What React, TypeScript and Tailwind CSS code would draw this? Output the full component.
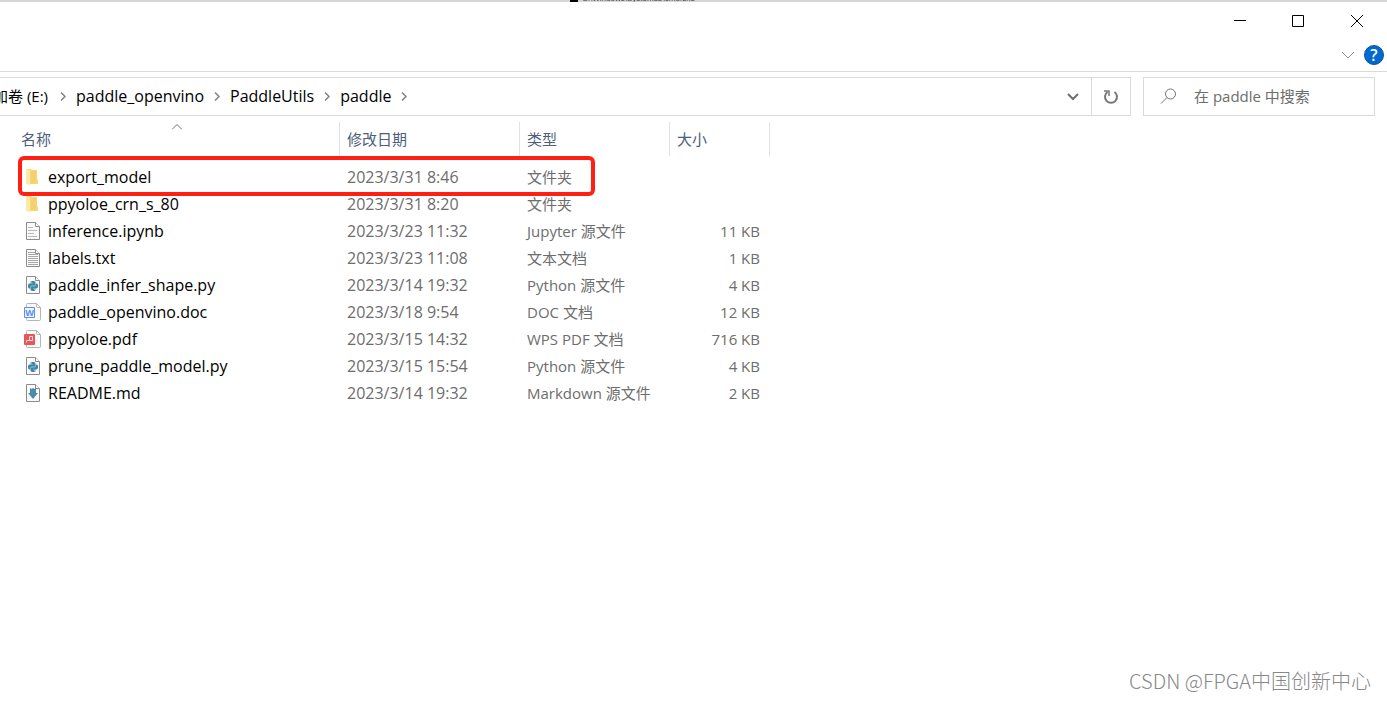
import { useState } from "react";
import { SiPython } from "react-icons/si";

type FileKind = "folder" | "notebook" | "text" | "python" | "doc" | "pdf" | "markdown";

type FileRow = {
    name: string;
    date: string;
    type: string;
    size?: string;
    kind: FileKind;
};

const files: FileRow[] = [
    { name: "export_model", date: "2023/3/31 8:46", type: "文件夹", kind: "folder" },
    { name: "ppyoloe_crn_s_80", date: "2023/3/31 8:20", type: "文件夹", kind: "folder" },
    { name: "inference.ipynb", date: "2023/3/23 11:32", type: "Jupyter 源文件", size: "11 KB", kind: "notebook" },
    { name: "labels.txt", date: "2023/3/23 11:08", type: "文本文档", size: "1 KB", kind: "text" },
    { name: "paddle_infer_shape.py", date: "2023/3/14 19:32", type: "Python 源文件", size: "4 KB", kind: "python" },
    { name: "paddle_openvino.doc", date: "2023/3/18 9:54", type: "DOC 文档", size: "12 KB", kind: "doc" },
    { name: "ppyoloe.pdf", date: "2023/3/15 14:32", type: "WPS PDF 文档", size: "716 KB", kind: "pdf" },
    { name: "prune_paddle_model.py", date: "2023/3/15 15:54", type: "Python 源文件", size: "4 KB", kind: "python" },
    { name: "README.md", date: "2023/3/14 19:32", type: "Markdown 源文件", size: "2 KB", kind: "markdown" },
];

const crumbs = ["paddle_openvino", "PaddleUtils", "paddle"];

function Page() {
    return (
        <>
            <path d="M2.5 .5h9l4 4v13h-13z" fill="#fafafa" stroke="#8c8c8c" />
            <path d="M11.5 .5v4h4" fill="#fff" stroke="#8c8c8c" />
        </>
    );
}

function RoundedPage() {
    return (
        <>
            <path d="M3.5 .5h9l4 4v12q0 1-1 1h-12q-1 0-1-1v-15q0-1 1-1z" fill="#fafafa" stroke="#b5b5b5" />
            <path d="M12.5 .5v3q0 1 1 1h3" stroke="#b5b5b5" />
        </>
    );
}

function FileIcon({ kind }: { kind: FileKind }) {
    return (
        <svg width="18" height="18" viewBox="0 0 18 18" fill="none" className="shrink-0" aria-hidden="true">
            {kind === "folder" && (
                <>
                    <path d="M2 1h5l1 1h5v9l1 1v4H2z" fill="#f8d775" />
                    <path d="M7 3h5v12H7z" fill="#f6d06c" />
                    <path d="M2 1l4 1v15l-4-1z" fill="#ffe9a6" />
                </>
            )}
            {kind === "notebook" && (
                <>
                    <Page />
                    <path d="M4 5.5h5M4 8.5h9M4 11.5h6M4 14.5h9" stroke="#b8b8b8" />
                </>
            )}
            {kind === "text" && (
                <>
                    <Page />
                    <path d="M4 3.5h7M4 5.5h10M4 7.5h10M4 9.5h10M4 11.5h10M4 13.5h10M4 15.5h10" stroke="#a8a8a8" />
                </>
            )}
            {kind === "python" && (
                <>
                    <Page />
                    <SiPython x="4" y="5" size={10} color="#3d87a8" />
                </>
            )}
            {kind === "doc" && (
                <>
                    <RoundedPage />
                    <path d="M.5 4.5h10v10H.5z" fill="#eef4ff" stroke="#5b8ff0" />
                    <text x="5.5" y="13" textAnchor="middle" fontSize="9" fontWeight="700" fill="#5b8ff0">W</text>
                </>
            )}
            {kind === "pdf" && (
                <>
                    <RoundedPage />
                    <rect y="4" width="11" height="11" rx="1" fill="#e8565a" />
                    <path d="M2.5 12.5v-2h6v-4h-3v4" stroke="#fbdcdc" />
                </>
            )}
            {kind === "markdown" && (
                <>
                    <Page />
                    <path d="M6 4l1.5 1L9 4l1.5 1L12 4v5h2l-5 6-5-6h2z" fill="#4a8aab" />
                </>
            )}
        </svg>
    );
}

function Chevron() {
    return (
        <svg width="6" height="9" viewBox="0 0 6 9" fill="none" stroke="#808080" strokeWidth="1.5" className="shrink-0" aria-hidden="true">
            <path d="M1 .5l4 4-4 4" />
        </svg>
    );
}

function TitleBar() {
    return (
        <header>
            {/* sliver of the console window behind this one */}
            <div className="flex h-0.5 items-end overflow-hidden bg-[#d6d6d6] pl-[570px] font-['Liberation_Sans',sans-serif] text-[8px]/[7px] text-[#444]">
                <span className="mr-1 h-2 w-2 bg-black" />
                <span>C:\Windows\System32\cmd.exe</span>
            </div>
            <div className="flex h-9 justify-end pt-0.5">
                <button aria-label="最小化" className="flex w-[58px] items-center justify-center">
                    <svg width="12" height="12" viewBox="0 0 12 12" stroke="#000"><path d="M0 5.5h12" /></svg>
                </button>
                <button aria-label="最大化" className="flex w-[58px] items-center justify-center">
                    <svg width="12" height="12" viewBox="0 0 12 12" fill="none" stroke="#000"><path d="M.5 .5h11v11H.5z" /></svg>
                </button>
                <button aria-label="关闭" className="flex w-[60px] items-center justify-center">
                    <svg width="12" height="12" viewBox="0 0 12 12" stroke="#000"><path d="M0 0l12 12M12 0L0 12" /></svg>
                </button>
            </div>
            <div className="flex h-[34px] items-center justify-end gap-2.5 border-b border-[#dadada] pr-[3px]">
                <button aria-label="展开功能区">
                    <svg width="12" height="8" viewBox="0 0 12 8" fill="none" stroke="#909090"><path d="M0 1l6 6 6-6" /></svg>
                </button>
                <button aria-label="帮助" className="flex h-5 w-5 items-center justify-center rounded-full border border-[#0a559f] bg-[#0069cf] text-[16px]/4 font-semibold text-white">
                    ?
                </button>
            </div>
        </header>
    );
}

function AddressBar() {
    const [query, setQuery] = useState("");

    return (
        <div className="mt-[5px] flex h-[39px] gap-3 pr-3">
            <nav className="flex min-w-0 flex-1 border border-l-0 border-[#d9d9d9]">
                <div className="flex min-w-0 flex-1 items-center overflow-hidden pb-px">
                    <a href="#drive" className="-ml-[7px] mr-3 whitespace-nowrap">加卷 (E:)</a>
                    {crumbs.map((crumb) => (
                        <div key={crumb} className="flex items-center text-base/5">
                            <Chevron />
                            <a href={`#${crumb}`} className="mx-2.5">{crumb}</a>
                        </div>
                    ))}
                    <Chevron />
                </div>
                <button aria-label="以前的位置" className="flex w-9 items-center justify-center">
                    <svg width="12" height="8" viewBox="0 0 12 8" fill="none" stroke="#707070" strokeWidth="2"><path d="M1 1l5 5 5-5" /></svg>
                </button>
                <button aria-label="刷新" className="flex w-[39px] items-center justify-center border-l border-[#d9d9d9]">
                    <svg width="16" height="16" viewBox="0 0 16 16" fill="none" stroke="#777" strokeWidth="2">
                        <path d="M11.5 3A6 6 0 1 1 4.5 3" />
                        <path d="M1 2h5v5" strokeWidth="1.5" />
                    </svg>
                </button>
            </nav>
            <label className="flex w-[232px] items-center border border-[#d9d9d9] pb-px pl-4">
                <svg width="17" height="17" viewBox="0 0 17 17" fill="none" stroke="#7b7078" className="shrink-0" aria-hidden="true">
                    <circle cx="10.5" cy="6" r="5" />
                    <path d="M7 9.5L1 15.5" />
                </svg>
                <input
                    type="text"
                    value={query}
                    onChange={(e) => setQuery(e.target.value)}
                    aria-label="搜索"
                    placeholder="在 paddle 中搜索"
                    className="ml-[17px] min-w-0 flex-1 outline-none placeholder:text-[#6d6d6d]"
                />
            </label>
        </div>
    );
}

function FileTable() {
    return (
        <main className="relative pt-1.5">
            <table className="w-[770px] table-fixed border-separate border-spacing-0 text-left">
                <colgroup>
                    <col className="w-[340px]" />
                    <col className="w-[180px]" />
                    <col className="w-[150px]" />
                    <col className="w-[100px]" />
                </colgroup>
                <thead>
                    <tr className="h-[34px] text-[#4c607a]">
                        <th className="relative border-r border-[#e2e2e2] p-0 pl-[21px] font-normal">
                            名称
                            <svg width="10" height="6" viewBox="0 0 10 6" fill="none" stroke="#707070" className="absolute top-0.5 left-[172px]" aria-hidden="true">
                                <path d="M0 5.5l5-5 5 5" />
                            </svg>
                        </th>
                        <th className="border-r border-[#e2e2e2] p-0 pl-[7px] font-normal">修改日期</th>
                        <th className="border-r border-[#e2e2e2] p-0 pl-[7px] font-normal">类型</th>
                        <th className="border-r border-[#e2e2e2] p-0 pl-[7px] font-normal">大小</th>
                    </tr>
                </thead>
                <tbody className="text-[#6d6d6d] before:block before:h-[7px]">
                    {files.map((file) => (
                        <tr key={file.name} className="h-[27px]">
                            <td className="p-0 pl-6 text-base/5 text-black">
                                <div className="flex items-center gap-1.5">
                                    <FileIcon kind={file.kind} />
                                    {file.name}
                                </div>
                            </td>
                            <td className="p-0 pl-[7px] text-base/5">{file.date}</td>
                            <td className="p-0 pl-[7px]">{file.type}</td>
                            <td className="p-0 pr-2.5 text-right">{file.size}</td>
                        </tr>
                    ))}
                </tbody>
            </table>
            {/* highlight around the first folder */}
            <div className="pointer-events-none absolute top-10 left-[18px] h-10 w-[577px] rounded-md border-4 border-[#ff2014]" />
        </main>
    );
}

export default function App() {
    return (
        <div className="relative min-h-screen overflow-hidden bg-white font-['Open_Sans','Noto_Sans_CJK_SC',sans-serif] text-[15px]/5 text-black">
            <TitleBar />
            <AddressBar />
            <FileTable />
            <p className="absolute right-4 bottom-2 font-['Noto_Sans_CJK_SC',sans-serif] text-[20px]/6 font-light text-[#888]">
                CSDN @FPGA中国创新中心
            </p>
        </div>
    );
}
